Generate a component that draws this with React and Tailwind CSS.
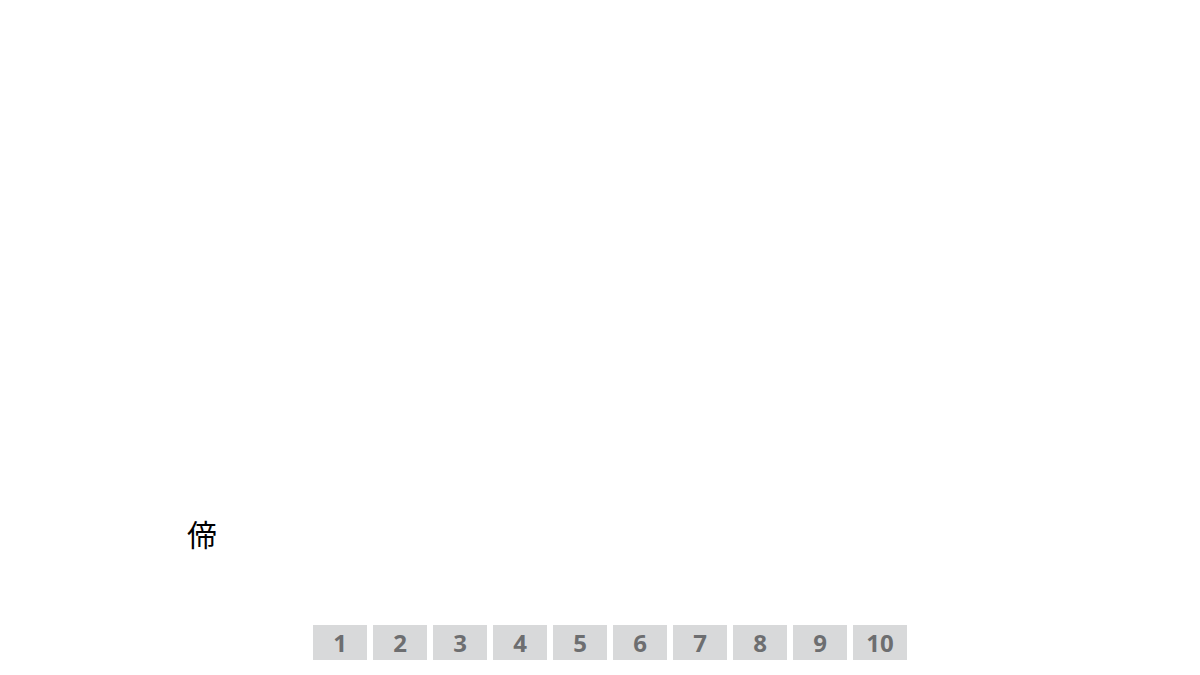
const pages = [1, 2, 3, 4, 5, 6, 7, 8, 9, 10];

export default function App() {
  return (
    <div className="h-[675px] w-[1200px] bg-white flex flex-col overflow-hidden">
      {/* glyph */}
      <div className="pt-[514px] pl-[187px] h-[620px]">
        <span className="block text-[30px] leading-[38px] text-black font-['Noto_Sans_CJK_JP',serif]">
          偙
        </span>
      </div>

      {/* pager */}
      <div className="flex justify-center gap-[6px] pt-[5px] pl-[20px]">
        {pages.map((n) => (
          <div
            key={n}
            className="w-[54px] h-[35px] bg-[#d8d9da] flex items-center justify-center text-[24px] font-bold text-[#6d6e70] font-['Open_Sans',sans-serif]"
          >
            {n}
          </div>
        ))}
      </div>
    </div>
  );
}
